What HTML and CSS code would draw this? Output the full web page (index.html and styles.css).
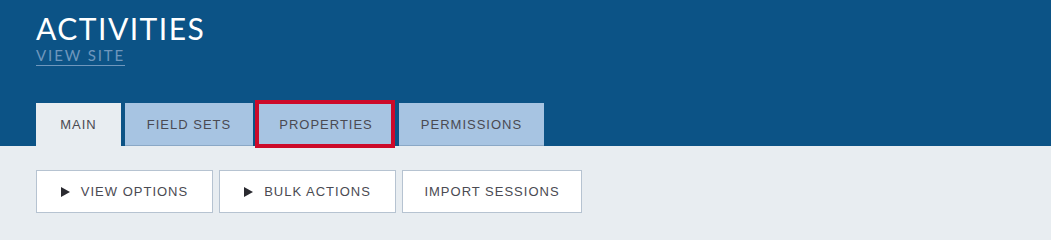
FILE: index.html
```html
<!DOCTYPE html>
<html>
<head>
<meta charset="utf-8">
<link rel="stylesheet" href="styles.css">
</head>
<body>
<header class="header">
  <h1 class="title">ACTIVITIES</h1>
  <div><a class="view-site" href="#">VIEW SITE</a></div>
  <nav class="tabs">
    <div class="tab active tab-main">MAIN</div>
    <div class="tab tab-fields">FIELD SETS</div>
    <div class="tab tab-props highlighted">PROPERTIES</div>
    <div class="tab tab-perms">PERMISSIONS</div>
  </nav>
</header>
<main class="content">
  <div class="actions">
    <button class="btn btn-w1"><span class="tri"></span>VIEW OPTIONS</button>
    <button class="btn btn-w1"><span class="tri"></span>BULK ACTIONS</button>
    <button class="btn btn-w2">IMPORT SESSIONS</button>
  </div>
</main>
</body>
</html>
```
FILE: styles.css
```css
* { box-sizing: border-box; }
html, body { margin: 0; padding: 0; }
body {
  width: 1051px;
  height: 233px;
  overflow: hidden;
  background: #e8edf1;
  font-family: "Liberation Sans", Arial, sans-serif;
}
.header {
  background: #0c5386;
  padding: 12px 36px 0;
  height: 146px;
  display: flex;
  flex-direction: column;
}
.title {
  margin: 0;
  font-family: Lato, "Open Sans", sans-serif;
  font-weight: 400;
  font-size: 30px;
  line-height: 32px;
  letter-spacing: 1.5px;
  color: #ffffff;
}
.view-site {
  display: inline-block;
  margin-top: 3px;
  font-family: Lato, "Open Sans", sans-serif;
  font-size: 15px;
  line-height: 17px;
  letter-spacing: 1.9px;
  color: #6f97bd;
  text-decoration: none;
  border-bottom: 1px solid #6f97bd;
  padding-bottom: 1px;
}
.tabs {
  display: flex;
  gap: 4px;
  margin-top: auto;
}
.tab {
  position: relative;
  height: 43px;
  display: flex;
  align-items: center;
  justify-content: center;
  font-size: 13px;
  letter-spacing: 1px;
  color: #4a4a52;
  background: #a7c4e2;
  border-bottom: 1px solid #8aa8c6;
}
.tab.active {
  background: #e8edf1;
  border-bottom: none;
}
.tab-main { width: 85px; }
.tab-fields { width: 128px; }
.tab-props { width: 138px; }
.tab-perms { width: 145px; }
.tab.highlighted::after {
  content: "";
  position: absolute;
  top: -3px;
  bottom: -3px;
  left: -2px;
  right: 0;
  border: 4px solid #cc0a2a;
}
.content {
  padding: 24px 36px;
}
.actions {
  display: flex;
  gap: 6px;
}
.btn {
  height: 43px;
  background: #ffffff;
  border: 1px solid #b6c3d1;
  font-family: "Liberation Sans", Arial, sans-serif;
  font-size: 13px;
  letter-spacing: 1px;
  color: #4a4a52;
  display: flex;
  align-items: center;
  justify-content: center;
  padding: 0;
}
.btn-w1 { width: 177px; }
.btn-w2 { width: 180px; }
.tri {
  display: inline-block;
  width: 0;
  height: 0;
  border-top: 5px solid transparent;
  border-bottom: 5px solid transparent;
  border-left: 9px solid #2a2a30;
  margin-right: 11px;
}
```
